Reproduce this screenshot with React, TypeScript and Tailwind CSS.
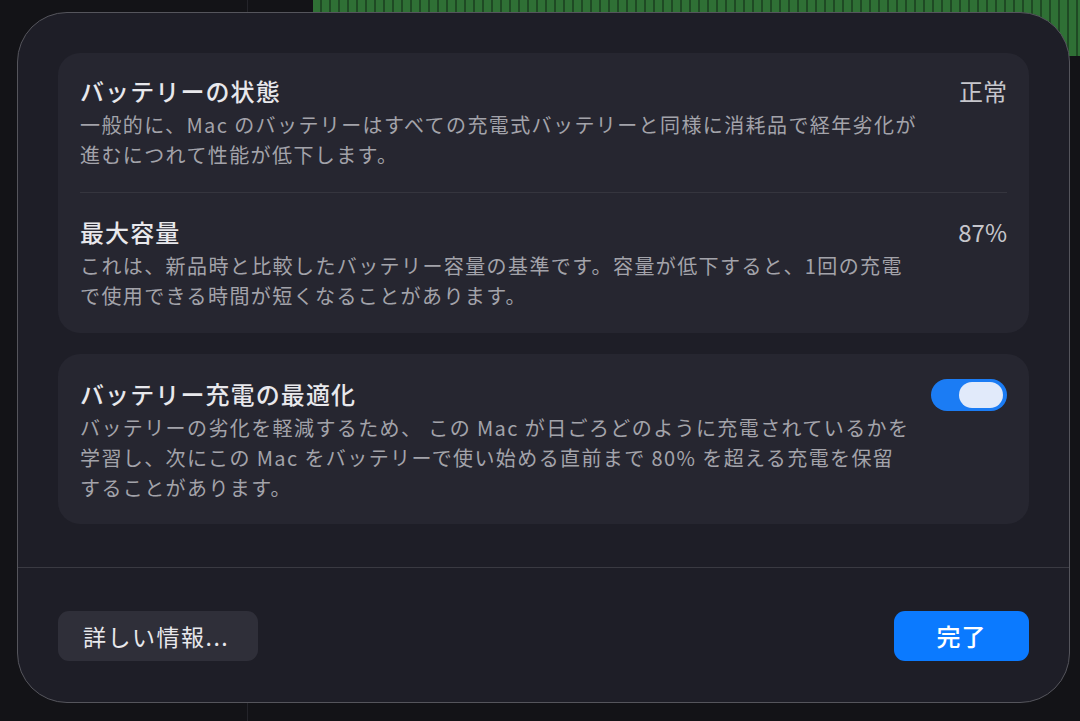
import React from "react";

const jp = "font-['Hiragino_Sans','Noto_Sans_CJK_JP','Noto_Sans',sans-serif]";

function Row({
  title,
  lines,
  right,
}: {
  title: string;
  lines: string[];
  right?: React.ReactNode;
}) {
  return (
    <div className="flex items-start justify-between">
      <div className="flex flex-col">
        <div className="text-[24px] leading-[30px] font-medium tracking-[1.1px] text-[#e8e8ec]">{title}</div>
        <div className="mt-[4px] flex flex-col text-[20px] leading-[30px] tracking-[1.4px] text-[#a3a3aa] whitespace-pre">
          {lines.map((l) => (
            <span key={l}>{l}</span>
          ))}
        </div>
      </div>
      {right}
    </div>
  );
}

function Toggle() {
  return (
    <div className="flex h-[32px] w-[76px] items-center justify-end rounded-full bg-[#1b7cf4] px-[4px]">
      <div className="h-[26px] w-[44px] rounded-full bg-[#e1eafa]" />
    </div>
  );
}

export default function App() {
  return (
    <div className={`relative h-[721px] w-[1080px] overflow-hidden bg-[#131317] ${jp}`}>
      {/* window behind the sheet */}
      <div className="absolute left-[313px] top-0 h-[56px] w-[767px] bg-[repeating-linear-gradient(90deg,#2f7035_0px,#2f7035_7px,#1f4a24_7px,#1f4a24_9px)]" />
      <div className="absolute left-[247px] top-0 h-[721px] w-px bg-[#24242a]" />

      <div className="relative z-10 pl-[17px] pt-[12px]">
        <div className="flex h-[691px] w-[1053px] flex-col rounded-[50px] border border-[#55555c] bg-[#1e1e27]">
          <div className="flex flex-col gap-[21px] px-[40px] pt-[40px]">
            <div className="rounded-[22px] bg-[#262630] px-[22px] pt-[23px] pb-[22px]">
              <Row
                title="バッテリーの状態"
                lines={[
                  "一般的に、Mac のバッテリーはすべての充電式バッテリーと同様に消耗品で経年劣化が",
                  "進むにつれて性能が低下します。",
                ]}
                right={<div className="text-[24px] leading-[30px] text-[#c6c6cc]">正常</div>}
              />
              <div className="mt-[22px] mb-[24px] h-px bg-[#35353e]" />
              <Row
                title="最大容量"
                lines={[
                  "これは、新品時と比較したバッテリー容量の基準です。容量が低下すると、1回の充電",
                  "で使用できる時間が短くなることがあります。",
                ]}
                right={<div className="text-[24px] leading-[30px] text-[#c6c6cc]">87%</div>}
              />
            </div>
            <div className="rounded-[22px] bg-[#262630] px-[22px] pt-[25px] pb-[21px]">
              <Row
                title="バッテリー充電の最適化"
                lines={[
                  "バッテリーの劣化を軽減するため、 この Mac が日ごろどのように充電されているかを",
                  "学習し、次にこの Mac をバッテリーで使い始める直前まで 80% を超える充電を保留",
                  "することがあります。",
                ]}
                right={<Toggle />}
              />
            </div>
          </div>

          <div className="mt-[43px] h-px w-full bg-[#3a3a42]" />

          <div className="flex items-center justify-between px-[40px] pt-[43px]">
            <button className="flex h-[50px] w-[200px] items-center rounded-[11px] bg-[#2f2f39] pl-[25px] text-[23px] tracking-[1.5px] text-[#e8e8ec]">
              詳しい情報...
            </button>
            <button className="flex h-[50px] w-[135px] items-center justify-center rounded-[11px] bg-[#0b7aff] text-[24px] font-medium tracking-[1px] text-white">
              完了
            </button>
          </div>
        </div>
      </div>
    </div>
  );
}
